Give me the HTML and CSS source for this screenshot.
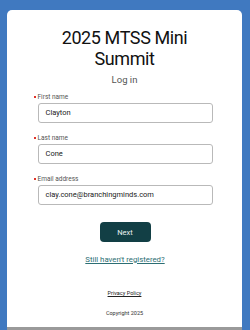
FILE: index.html
```html
<!DOCTYPE html>
<html>
<head>
<meta charset="utf-8">
<link rel="stylesheet" href="styles.css">
</head>
<body>
<div class="page">
  <main class="card">
    <h1 class="title">2025 MTSS Mini<br>Summit</h1>
    <p class="subtitle">Log in</p>
    <form class="form">
      <div class="field">
        <label class="label"><span class="req"></span>First name</label>
        <div class="input">Clayton</div>
      </div>
      <div class="field">
        <label class="label"><span class="req"></span>Last name</label>
        <div class="input">Cone</div>
      </div>
      <div class="field">
        <label class="label"><span class="req"></span>Email address</label>
        <div class="input">clay.cone@branchingminds.com</div>
      </div>
      <button type="button" class="btn">Next</button>
      <a class="register" href="#">Still haven't registered?</a>
    </form>
    <footer class="footer">
      <a class="privacy" href="#">Privacy Policy</a>
      <p class="copy">Copyright 2025</p>
    </footer>
  </main>
  <div class="shadow"></div>
</div>
</body>
</html>
```
FILE: styles.css
```css
* { box-sizing: border-box; }
html, body { margin: 0; padding: 0; }
body {
  background: #4079c0;
  font-family: Roboto, "Liberation Sans", sans-serif;
  width: 250px;
  height: 330px;
  overflow: hidden;
}
.page {
  padding: 10px 8px 0 7px;
}
.card {
  background: #fff;
  border-radius: 5px 5px 0 0;
  height: 317px;
  padding-top: 17px;
  display: flex;
  flex-direction: column;
  align-items: center;
}
.shadow {
  height: 3px;
  background: #9a9a9a;
}
.title {
  margin: 0;
  font-size: 18px;
  line-height: 21px;
  font-weight: 400;
  letter-spacing: -0.4px;
  color: #111;
  text-align: center;
}
.subtitle {
  margin: 5px 0 0;
  font-size: 9.5px;
  line-height: 12px;
  color: #555;
}
.form {
  margin-top: 6px;
  display: flex;
  flex-direction: column;
  align-items: center;
  width: 100%;
}
.field {
  width: 175px;
  margin-left: 1px;
  margin-bottom: 10px;
}
.label {
  display: block;
  position: relative;
  font-size: 6.5px;
  line-height: 10px;
  color: #555;
  margin-bottom: 1px;
}
.req {
  position: absolute;
  left: -4px;
  top: 4px;
  width: 2px;
  height: 2px;
  background: #e0322b;
}
.input {
  height: 20px;
  border: 1px solid #b9b9b9;
  border-radius: 3px;
  padding: 0 7px;
  font-size: 7.5px;
  line-height: 18px;
  color: #1a1a1a;
}
.btn {
  margin-top: 7px;
  margin-left: 1px;
  width: 51px;
  height: 20px;
  border: 0;
  border-radius: 4px;
  background: #123f45;
  color: #e8efef;
  font-family: inherit;
  font-size: 7.5px;
  padding: 0;
}
.register {
  margin-top: 12px;
  margin-left: 1px;
  font-size: 7.8px;
  line-height: 12px;
  color: #2c6e73;
  text-decoration: underline;
}
.footer {
  margin-top: 23px;
  display: flex;
  flex-direction: column;
  align-items: center;
}
.privacy {
  font-size: 5.5px;
  line-height: 8px;
  color: #222;
  text-decoration: underline;
}
.copy {
  margin: 12px 0 0;
  font-size: 5.5px;
  line-height: 8px;
  color: #333;
}
```
